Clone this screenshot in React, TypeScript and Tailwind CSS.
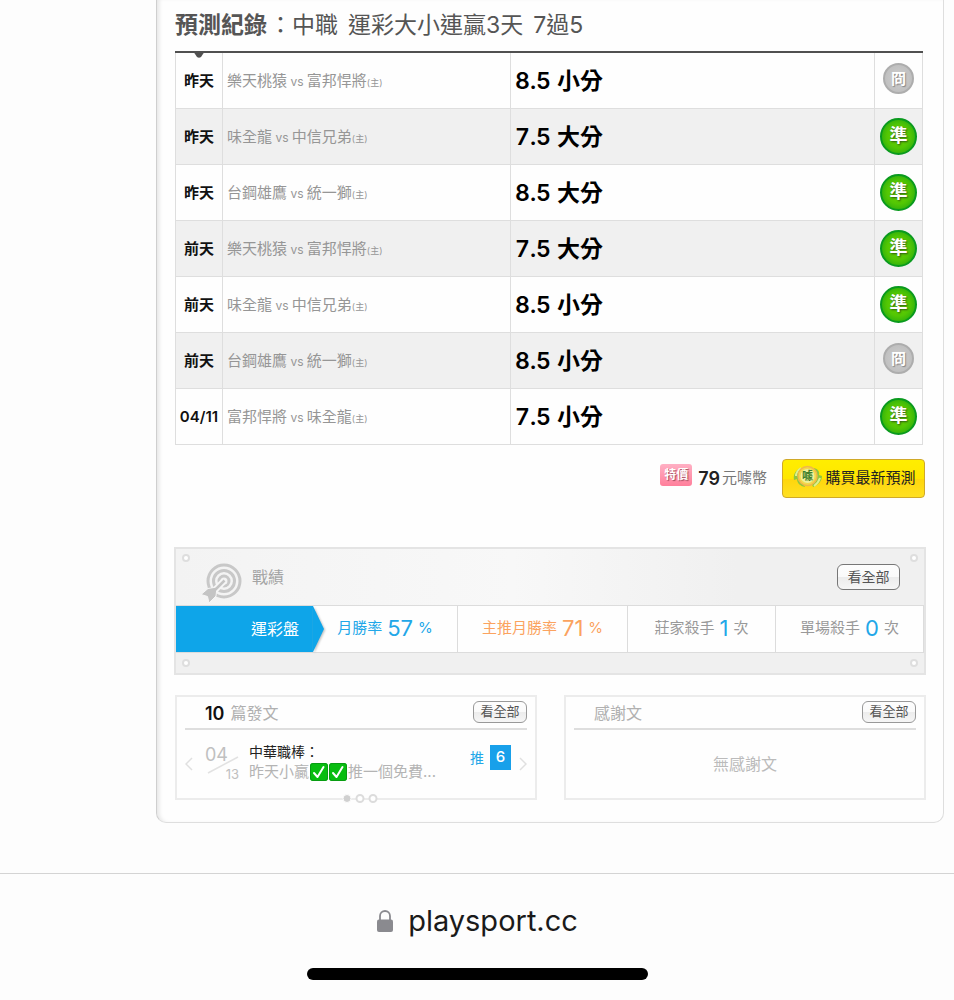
import type { ReactNode } from "react";

type Result = "hit" | "miss";

interface Prediction {
  day: string;
  away: string;
  home: string;
  pick: string;
  result: Result;
}

const predictions: Prediction[] = [
  { day: "昨天", away: "樂天桃猿", home: "富邦悍將", pick: "8.5 小分", result: "miss" },
  { day: "昨天", away: "味全龍", home: "中信兄弟", pick: "7.5 大分", result: "hit" },
  { day: "昨天", away: "台鋼雄鷹", home: "統一獅", pick: "8.5 大分", result: "hit" },
  { day: "前天", away: "樂天桃猿", home: "富邦悍將", pick: "7.5 大分", result: "hit" },
  { day: "前天", away: "味全龍", home: "中信兄弟", pick: "8.5 小分", result: "hit" },
  { day: "前天", away: "台鋼雄鷹", home: "統一獅", pick: "8.5 小分", result: "miss" },
  { day: "04/11", away: "富邦悍將", home: "味全龍", pick: "7.5 小分", result: "hit" },
];

function ResultBadge({ result }: { result: Result }) {
  if (result === "hit") {
    return (
      <span className="mx-auto flex size-[37px] items-center justify-center rounded-full border-2 border-[#0a9a1e] bg-[radial-gradient(circle,#6fd400_0%,#52c604_50%,#14a012_100%)] text-[18px] leading-none font-bold text-white [text-shadow:1px_1px_2px_#2b5a10]">
        準
      </span>
    );
  }
  return (
    <span className="mx-auto mb-1 flex size-[31px] items-center justify-center rounded-full border-2 border-[#adadad] bg-[radial-gradient(circle,#cfcfcf_0%,#c0c0c0_70%,#b0b0b0_100%)] text-[15px] leading-none font-bold text-white [text-shadow:1px_1px_1px_#888]">
      冏
    </span>
  );
}

function ViewAll({ large = false }: { large?: boolean }) {
  return (
    <button
      type="button"
      className={
        "flex items-center justify-center rounded-md border bg-[linear-gradient(#fdfdfd_0%,#fafafa_50%,#ececec_51%,#f6f6f6_100%)] text-[#555] " +
        (large
          ? "h-[26px] w-[63px] border-[#777] text-[14px]"
          : "h-[22px] w-[54px] border-[#999] text-[13px]")
      }
    >
      看全部
    </button>
  );
}

function Target() {
  return (
    <svg className="h-[42px] w-[42px]" viewBox="0 0 42 42" fill="none" aria-hidden="true">
      <circle cx="23" cy="19" r="16" stroke="#c8c8c8" strokeWidth="3" />
      <circle cx="23" cy="19" r="10.500" stroke="#c8c8c8" strokeWidth="3" />
      <circle cx="23" cy="19" r="5" stroke="#c8c8c8" strokeWidth="3" />
      <path d="M23 19 10 32" stroke="#f6f6f6" strokeWidth="6.500" />
      <path d="M0 32.500 7 26.500 16 25 15 34 8 41 6.500 34.500Z" fill="#c4c4c4" stroke="#f6f6f6" strokeWidth="1" />
      <path d="M23.500 18.500 9 33" stroke="#c4c4c4" strokeWidth="2.500" />
    </svg>
  );
}

function Coin() {
  return (
    <svg className="mb-1 h-6 w-[30px]" viewBox="0 0 30 24" aria-hidden="true">
      <path d="M7 3C2 6 0 10 1 15l3-1c0 4 3 7 8 8L9 12Z" fill="#8fc63f" />
      <path d="M21 3c4 1 6 4 5 7l3 1c0 5-4 9-9 11l-3-8Z" fill="#8fc63f" />
      <path d="M3 11c0-3 2-6 5-8M27 13c-1 3-3 6-6 8" stroke="#dff08f" strokeWidth="2" fill="none" />
      <circle cx="14.500" cy="11" r="9.500" fill="#f4d84a" stroke="#f0b848" strokeWidth="1.500" />
      <circle cx="14.500" cy="11" r="7" fill="#eef09a" />
      <text x="14.500" y="15" textAnchor="middle" fontSize="11" fontWeight="700" fill="#3f7f2a">
        噱
      </text>
    </svg>
  );
}

function Check() {
  return (
    <svg className="inline-block size-[18px] align-[-4px]" viewBox="0 0 18 18" role="img" aria-label="✅">
      <rect width="18" height="18" rx="3" fill="#08bd10" />
      <rect x="0.500" y="0.500" width="17" height="17" rx="2.500" fill="none" stroke="#089c12" />
      <path d="m4 10 3.500 4L13.500 4" fill="none" stroke="#fff" strokeWidth="2" strokeLinecap="round" strokeLinejoin="round" />
    </svg>
  );
}

function Chevron({ flip = false }: { flip?: boolean }) {
  return (
    <svg className="h-4 w-2" viewBox="0 0 8 16" fill="none" stroke="#e0e0e0" strokeWidth="1.500" aria-hidden="true">
      <path d={flip ? "m1 2 6 6-6 6" : "M7 2 1 8l6 6"} />
    </svg>
  );
}

function Rivets() {
  return (
    <div className="flex justify-between px-[6px]">
      <span className="size-2 rounded-full border-2 border-[#dedede] bg-white" />
      <span className="size-2 rounded-full border-2 border-[#dedede] bg-white" />
    </div>
  );
}

interface StatProps {
  label: string;
  value: string;
  unit: string;
  className: string;
  valueClass?: string;
}

function Stat({ label, value, unit, className, valueClass = "" }: StatProps) {
  return (
    <div className={"flex items-center justify-center gap-[5px] border-r border-[#dcdcdc] text-[15px] " + className}>
      <span>{label}</span>
      <span className={"text-[22px] " + valueClass}>{value}</span>
      <span>{unit}</span>
    </div>
  );
}

function Panel({ title, children }: { title: ReactNode; children: ReactNode }) {
  return (
    <section className="relative flex h-[105px] flex-col border-2 border-[#ececec] px-2">
      <header className="flex h-[33px] shrink-0 items-center justify-between border-b-2 border-[#dedede] pl-5">
        <h3 className="flex items-center gap-[6px] pt-[2px] text-[16px] text-[#b0b0b0]">{title}</h3>
        <ViewAll />
      </header>
      {children}
    </section>
  );
}

export default function App() {
  return (
    <div className="flex min-h-screen flex-col bg-[#fdfdfd] font-[Inter,'Noto_Sans_CJK_TC',sans-serif] text-black">
      <main className="mb-[50px] pr-[10px] pl-[156px]">
        <div className="rounded-b-[10px] border-x border-b border-[#dedede] border-l-[#cfcfcf] bg-[#fefefe] px-[17px] pb-[22px] shadow-[inset_4px_0_4px_-2px_#e4e4e4]">
          <div className="mr-[3px] ml-px">
            <h2 className="flex h-[51px] items-center gap-[2px] text-[23px] text-[#555]">
              <b>預測紀錄</b>
              <span>：中職</span>
              <span className="ml-2">運彩大小連贏3天</span>
              <span className="ml-2">7過5</span>
            </h2>
            <div className="relative">
              <table className="w-full table-fixed border-collapse border-x border-b border-[#dedede]">
                <colgroup>
                  <col className="w-[47px]" />
                  <col className="w-[288px]" />
                  <col />
                  <col className="w-[48px]" />
                </colgroup>
                <tbody>
                  {predictions.map((p, i) => (
                    <tr
                      key={i}
                      className="h-14 border-b border-[#dedede] first:border-t-2 first:border-t-[#505050] even:bg-[#f0f0f0]"
                    >
                      <th
                        scope="row"
                        className="border-r border-[#dedede] p-0 pt-[2px] text-center text-[15px] font-semibold text-[#111]"
                      >
                        {p.day}
                      </th>
                      <td className="border-r border-[#dedede] p-0 pt-[2px] pl-1 text-[15px] text-[#969696]">
                        {p.away}
                        <span className="text-[12px]"> vs </span>
                        {p.home}
                        <span className="text-[9px]">(主)</span>
                      </td>
                      <td className="border-r border-[#dedede] p-0 pt-[2px] pl-1 text-[23px] font-semibold tabular-nums">
                        {p.pick}
                      </td>
                      <td className="p-0">
                        <ResultBadge result={p.result} />
                      </td>
                    </tr>
                  ))}
                </tbody>
              </table>
              <svg className="absolute top-0 left-[17px] h-[7px] w-[14px]" viewBox="0 0 14 7" aria-hidden="true">
                <path d="M1 0h12L9 6q-2 1.500-4 0Z" fill="#505050" />
              </svg>
            </div>
          </div>

          <div className="mt-[14px] mr-px flex h-10 items-center justify-end">
            <span className="mb-2 flex h-[22px] w-8 items-center justify-center rounded-[3px] bg-[linear-gradient(#ffb0c4,#ff7f9b)] text-[12px] leading-none font-bold text-white [text-shadow:1px_1px_1px_#a04a5c]">
              特價
            </span>
            <span className="ml-[6px] flex items-center gap-[2px] text-[15px] text-[#777]">
              <b className="text-[18px] font-semibold text-[#222]">79</b>元噱幣
            </span>
            <button
              type="button"
              className="ml-[15px] flex h-[39px] w-[143px] items-center justify-center gap-[2px] rounded border border-[#d0a928] bg-[linear-gradient(#ffee00_0%,#ffe600_50%,#ffd60c_52%,#ffe022_100%)] pl-[2px] text-[15px] text-[#222]"
            >
              <Coin />
              <span>購買最新預測</span>
            </button>
          </div>

          <section className="mt-12 border-2 border-[#e4e4e4] bg-[linear-gradient(90deg,#f3f3f3,#f8f8f8_45%,#f0f0f0_75%)]">
            <div className="pt-[5px]">
              <Rivets />
              <div className="flex h-[43px] items-start justify-between pr-6 pl-[25px]">
                <div className="flex items-start gap-[9px]">
                  <Target />
                  <h3 className="mt-[3px] text-[16px] text-[#a4a4a4]">戰績</h3>
                </div>
                <div className="mt-[2px]">
                  <ViewAll large />
                </div>
              </div>
            </div>
            <div className="flex h-[48px] border-y border-[#dcdcdc] bg-[#fefefe]">
              <div className="relative flex w-[137px] items-center justify-end bg-[#0ea5e9] pr-[14px] text-[16px] text-white">
                運彩盤
                <svg
                  className="absolute top-0 left-full h-full w-[14px] drop-shadow-[1px_1px_1px_#bbb]"
                  viewBox="0 0 14 46"
                  preserveAspectRatio="none"
                  aria-hidden="true"
                >
                  <path d="M0 0 11 23 0 46Z" fill="#0ea5e9" />
                </svg>
              </div>
              <Stat label="月勝率" value="57" unit="%" className="w-[145px] text-[#22a7e8]" />
              <Stat label="主推月勝率" value="71" unit="%" className="grow text-[#fba35f]" />
              <Stat label="莊家殺手" value="1" unit="次" className="w-[148px] text-[#999]" valueClass="text-[#22a7e8]" />
              <Stat label="單場殺手" value="0" unit="次" className="w-[148px] text-[#999]" valueClass="text-[#22a7e8]" />
            </div>
            <div className="h-5 bg-[#f0f0f0] pt-[6px]">
              <Rivets />
            </div>
          </section>

          <div className="mt-5 ml-px grid grid-cols-2 gap-[27px]">
            <Panel
              title={
                <>
                  <b className="text-[18px] font-semibold text-[#111]">10</b>篇發文
                </>
              }
            >
              <div className="flex grow items-center">
                <button type="button" aria-label="上一篇" className="flex">
                  <Chevron />
                </button>
                <div className="ml-3 flex w-[34px] flex-col">
                  <span className="text-[18px] leading-[18px] text-[#c0c0c0]">04</span>
                  <svg className="h-[2px] w-full overflow-visible" viewBox="0 0 34 2" aria-hidden="true">
                    <path d="M3 9 33-7" stroke="#e2e2e2" strokeWidth="1.500" />
                  </svg>
                  <span className="self-end text-[13px] leading-4 text-[#c0c0c0]">13</span>
                </div>
                <div className="ml-[10px] mb-1 min-w-0 grow whitespace-nowrap">
                  <p className="text-[14px] leading-5 text-[#222]">中華職棒：</p>
                  <p className="flex items-center gap-px text-[15px] leading-5 text-[#b4b4b4]">
                    昨天小贏
                    <Check />
                    <Check />
                    推一個免費...
                  </p>
                </div>
                <div className="mr-2 mb-3 flex shrink-0 items-center gap-[6px] text-[14px] text-[#22a7e8]">
                  推
                  <span className="flex h-[25px] w-[21px] items-center justify-center bg-[#18a0ea] text-[15px] font-medium text-white">
                    6
                  </span>
                </div>
                <button type="button" aria-label="下一篇" className="flex">
                  <Chevron flip />
                </button>
              </div>
              <div className="absolute -bottom-[5px] left-1/2 flex -translate-x-1/2 gap-1 pl-2">
                <span className="size-[9px] rounded-full border border-[#fdfdfd] bg-[#d0d0d0]" />
                <span className="size-[9px] rounded-full border-2 border-[#dcdcdc] bg-white" />
                <span className="size-[9px] rounded-full border-2 border-[#dcdcdc] bg-white" />
              </div>
            </Panel>
            <Panel title="感謝文">
              <p className="flex grow items-center justify-center text-[16px] text-[#bbb]">無感謝文</p>
            </Panel>
          </div>
        </div>
      </main>

      <footer className="flex grow flex-col items-center border-t border-[#d4d4d4] bg-[#fdfdfd] pt-[26px]">
        <div className="flex h-[42px] items-center gap-[14px] text-[29px] text-[#1a1a1a]">
          <svg className="h-6 w-[18px]" viewBox="0 0 18 24" aria-hidden="true">
            <path d="M4 12V7a5 5 0 0 1 10 0v5" fill="none" stroke="#8a8a8f" strokeWidth="1.800" />
            <rect x="1" y="10.500" width="16" height="12.500" rx="2" fill="#8a8a8f" />
          </svg>
          playsport.cc
        </div>
        <div className="mt-[26px] h-3 w-[341px] rounded-full bg-black" />
      </footer>
    </div>
  );
}
